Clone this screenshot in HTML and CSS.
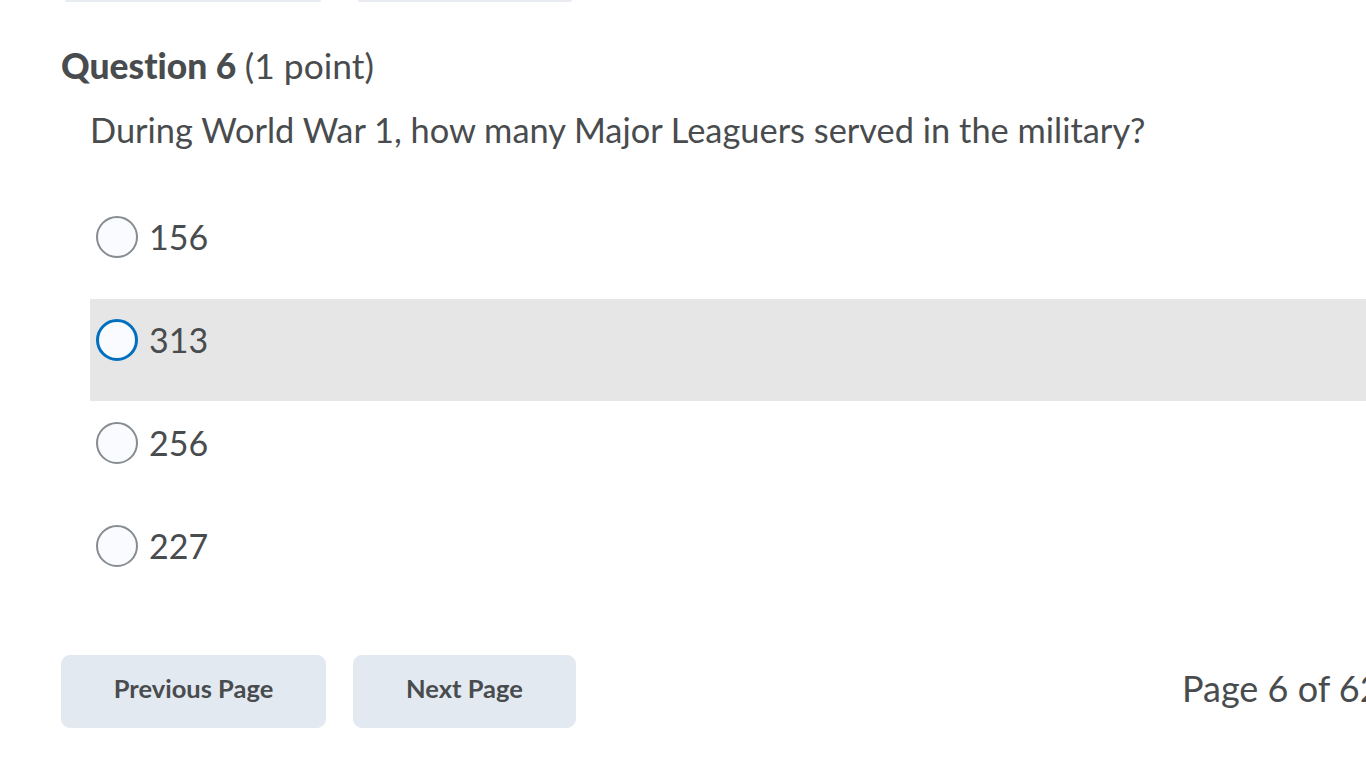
FILE: index.html
```html
<!DOCTYPE html>
<html lang="en">
<head>
<meta charset="utf-8">
<title>Question 6</title>
<link rel="stylesheet" href="styles.css">
</head>
<body>
<div class="page">
  <div class="top-buttons">
    <span class="ghost-btn ghost-prev"></span>
    <span class="ghost-btn ghost-next"></span>
  </div>
  <h2 class="q-title"><strong>Question 6</strong> <span class="points">(1 point)</span></h2>
  <div class="q-body">
    <p class="q-text">During World War 1, how many Major Leaguers served in the military?</p>
    <div class="options">
      <label class="option"><span class="radio"></span><span class="opt-text">156</span></label>
      <label class="option option-hover"><span class="radio radio-focus"></span><span class="opt-text">313</span></label>
      <label class="option"><span class="radio"></span><span class="opt-text">256</span></label>
      <label class="option"><span class="radio"></span><span class="opt-text">227</span></label>
    </div>
  </div>
  <div class="footer">
    <button class="btn btn-prev">Previous Page</button>
    <button class="btn btn-next">Next Page</button>
    <span class="page-count">Page 6 of 62</span>
  </div>
</div>
</body>
</html>
```

FILE: styles.css
```css
html, body {
  margin: 0;
  padding: 0;
  overflow: hidden;
  background: #ffffff;
}
body {
  font-family: Lato, "Open Sans", sans-serif;
  font-variant-ligatures: none;
  color: #494c4e;
  width: 1366px;
  height: 768px;
}
.page {
  width: 1460px;
  padding-left: 61px;
  box-sizing: border-box;
}
.top-buttons {
  display: flex;
  gap: 37px;
  height: 2px;
  padding-left: 4px;
}
.ghost-btn {
  display: block;
  height: 2px;
  background: #e8ebef;
  border-radius: 0 0 6px 6px;
}
.ghost-prev { width: 256px; }
.ghost-next { width: 214px; }
.q-title {
  margin: 44px 0 0 0;
  font-size: 35.4px;
  line-height: 40px;
  font-weight: 700;
}
.q-title .points {
  font-weight: 400;
}
.q-body {
  padding-left: 29px;
}
.q-text {
  margin: 24px 0 0 0;
  font-size: 34.4px;
  line-height: 40px;
}
.options {
  margin-top: 46px;
  display: flex;
  flex-direction: column;
}
.option {
  display: flex;
  align-items: center;
  box-sizing: border-box;
  height: 103px;
  padding: 20px 0 41px 6px;
  gap: 11px;
}
.option-hover {
  background: #e6e6e6;
  height: 102px;
  margin-bottom: 1px;
}
.radio {
  width: 42px;
  height: 42px;
  box-sizing: border-box;
  border-radius: 50%;
  border: 2px solid #868c8f;
  background: #f9fbff;
  flex: none;
}
.radio-focus {
  border: 3px solid #006fbf;
}
.opt-text {
  font-size: 34px;
  line-height: 42px;
}
.footer {
  margin-top: 47px;
  display: flex;
  align-items: center;
  gap: 27px;
}
.btn {
  font-family: Lato, "Open Sans", sans-serif;
  font-variant-ligatures: none;
  font-weight: 700;
  font-size: 25.5px;
  color: #494c4e;
  background: #e3e9f1;
  border: 1px solid #e3e9f1;
  border-radius: 9px;
  height: 73px;
  padding: 0 0 7px 0;
}
.btn-prev { width: 265px; }
.btn-next { width: 223px; }
.page-count {
  margin-left: 579px;
  margin-bottom: 8px;
  white-space: nowrap;
  font-size: 36px;
  line-height: 40px;
}
```
